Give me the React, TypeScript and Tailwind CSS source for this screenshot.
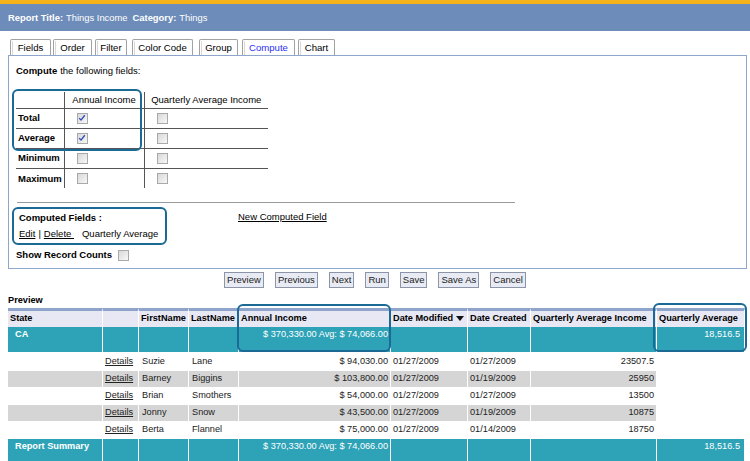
import React from 'react';

const tabs = [
  { label: 'Fields', cls: 'w-[41px] ml-[2px]' },
  { label: 'Order', cls: 'w-[39px] ml-[2px]' },
  { label: 'Filter', cls: 'w-[32px] ml-[3px]' },
  { label: 'Color Code', cls: 'w-[61px] ml-[5px]' },
  { label: 'Group', cls: 'w-[39px] ml-[6px]' },
  { label: 'Compute', cls: 'w-[53px] ml-[4px]', active: true },
  { label: 'Chart', cls: 'w-[37px] ml-[3px]' },
];

const rows = [
  { first: 'Suzie', last: 'Lane', income: '$ 94,030.00', mod: '01/27/2009', created: '01/27/2009', qai: '23507.5' },
  { first: 'Barney', last: 'Biggins', income: '$ 103,800.00', mod: '01/27/2009', created: '01/19/2009', qai: '25950' },
  { first: 'Brian', last: 'Smothers', income: '$ 54,000.00', mod: '01/27/2009', created: '01/27/2009', qai: '13500' },
  { first: 'Jonny', last: 'Snow', income: '$ 43,500.00', mod: '01/27/2009', created: '01/19/2009', qai: '10875' },
  { first: 'Berta', last: 'Flannel', income: '$ 75,000.00', mod: '01/27/2009', created: '01/14/2009', qai: '18750' },
];

const buttons = ['Preview', 'Previous', 'Next', 'Run', 'Save', 'Save As', 'Cancel'];

function Box({ checked }: { checked?: boolean }) {
  return (
    <span className="inline-flex h-[11px] w-[11px] items-center justify-center border border-[#a9a9a9] bg-gradient-to-br from-[#d9d9d9] to-[#f7f7f7] align-middle">
      {checked && (
        <svg viewBox="0 0 9 9" className="h-[8px] w-[8px]">
          <path d="M1.3 4.6 L3.4 6.8 L7.6 1.4" fill="none" stroke="#2b4db5" strokeWidth="1.5" />
        </svg>
      )}
    </span>
  );
}

export default function App() {
  const th = 'h-[19px] border-t-[3px] border-t-[#8fa4ca] border-r border-r-white bg-[#e7e8f4] px-[2px] text-left font-bold align-middle whitespace-nowrap overflow-hidden';
  const teal = 'h-[27px] align-top bg-[#2ea3b7] border-r border-r-white border-b-2 border-b-white px-[2px] pt-[3px] text-white';
  const td = 'h-[17px] border-r border-r-white border-b border-b-white px-[2px] align-middle whitespace-nowrap text-[#222]';

  return (
    <div className="h-[461px] w-[750px] overflow-hidden bg-white font-['Liberation_Sans',Arial,sans-serif] text-[9.2px] leading-none text-black">
      {/* top bars */}
      <div className="h-[4px] bg-[#f6b219]" />
      <div className="flex h-[27px] items-center px-2 text-[9.4px] text-white bg-[#6d8cb9]">
        <b>Report Title:</b>
        <span className="ml-[3px]">Things Income</span>
        <b className="ml-[5px]">Category:</b>
        <span className="ml-[3px]">Things</span>
      </div>

      {/* tabs */}
      <div className="mt-[8px] flex px-2">
        {tabs.map((t) => (
          <div
            key={t.label}
            className={`${t.cls} flex h-[16px] items-center justify-center rounded-t-[2px] border border-b-0 border-[#a2a2a2] shadow-[inset_1px_1px_0_#ffffff,inset_2px_0_0_#d8d8d8] text-[9.6px] ${t.active ? 'text-[#2e2ef5]' : 'text-black'}`}
          >
            {t.label}
          </div>
        ))}
      </div>

      {/* compute panel */}
      <div className="relative mx-2 h-[214px] w-[739px] border border-[#8ea6cc] pl-[7px] pt-[8px] text-[9.5px]">
        <div className="flex h-[13px] items-center">
          <b>Compute</b>
          <span className="ml-[3px]">the following fields:</span>
        </div>

        <table className="mt-[15px] table-fixed border-collapse">
          <colgroup>
            <col className="w-[48px]" />
            <col className="w-[80px]" />
            <col className="w-[124px]" />
          </colgroup>
          <tbody>
            <tr className="h-[16px] border-b border-[#555]">
              <td className="border-r border-[#555]" />
              <td className="border-r border-[#555] text-center">Annual Income</td>
              <td className="text-center">Quarterly Average Income</td>
            </tr>
            {[
              ['Total', true],
              ['Average', true],
              ['Minimum', false],
              ['Maximum', false],
            ].map(([label, checked], i) => (
              <tr key={label as string} className={`h-[20px] ${i < 3 ? 'border-b border-[#555]' : ''}`}>
                <td className="border-r border-[#555] pl-[2px] font-bold">{label}</td>
                <td className="border-r border-[#555] pl-[12px]">
                  <Box checked={checked as boolean} />
                </td>
                <td className="pl-[12px]">
                  <Box />
                </td>
              </tr>
            ))}
          </tbody>
        </table>

        {/* highlight over Total / Average */}
        <div className="absolute left-[3px] top-[33px] h-[62px] w-[130px] rounded-[6px] border-2 border-[#1b6a95]" />

        <div className="ml-[1px] mt-[14px] h-px w-[498px] bg-[#9a9a9a]" />

        <div className="mt-[4px] flex items-start">
          <div className="-ml-[4px] w-[155px] rounded-[6px] border-2 border-[#1b6a95] px-[5px] py-[1px]">
            <div className="flex h-[16px] items-center font-bold">Computed Fields :</div>
            <div className="flex h-[16px] items-center">
              <span className="underline">Edit</span>
              <span className="ml-[3px]">|</span>
              <span className="ml-[3px] underline">Delete&nbsp;</span>
              <span className="ml-[8px]">Quarterly Average</span>
            </div>
          </div>
          <div className="ml-[71px] mt-[2px] flex h-[16px] items-center underline">New Computed Field</div>
        </div>

        <div className="mt-[2px] flex h-[16px] items-center">
          <b>Show Record Counts</b>
          <span className="ml-[6px]">
            <Box />
          </span>
        </div>
      </div>

      {/* buttons */}
      <div className="mt-[3px] flex justify-center gap-[11px]">
        {buttons.map((b) => (
          <div
            key={b}
            className="flex h-[16px] items-center border border-[#8c95a8] bg-[#e8ebf4] px-[2px] text-[9.5px] text-[#222]"
          >
            {b}
          </div>
        ))}
      </div>

      <div className="ml-2 mt-[6px] flex h-[14px] items-center font-bold">Preview</div>

      {/* preview table */}
      <div className="relative ml-2">
        <table className="w-[737px] table-fixed border-separate border-spacing-0">
          <colgroup>
            <col className="w-[95px]" />
            <col className="w-[36px]" />
            <col className="w-[50px]" />
            <col className="w-[50px]" />
            <col className="w-[152px]" />
            <col className="w-[77px]" />
            <col className="w-[63px]" />
            <col className="w-[126px]" />
            <col className="w-[88px]" />
          </colgroup>
          <thead>
            <tr>
              <th className={th}>State</th>
              <th className={th} />
              <th className={th}>FirstName</th>
              <th className={th}>LastName</th>
              <th className={th}>Annual Income</th>
              <th className={th}>
                <span className="inline-flex items-center">
                  Date Modified
                  <svg viewBox="0 0 8 5" className="ml-[3px] h-[5px] w-[8px]">
                    <path d="M0 0 H8 L4 5 Z" fill="#111" />
                  </svg>
                </span>
              </th>
              <th className={th}>Date Created</th>
              <th className={th}>Quarterly Average Income</th>
              <th className={th}>Quarterly Average</th>
            </tr>
          </thead>
          <tbody>
            <tr>
              <td className={`${teal} pl-[7px] font-bold text-black`}>CA</td>
              <td className={teal} />
              <td className={teal} />
              <td className={teal} />
              <td className={`${teal} text-right`}>$ 370,330.00 Avg: $ 74,066.00</td>
              <td className={teal} />
              <td className={teal} />
              <td className={teal} />
              <td className={`${teal} pr-[4px] text-right`}>18,516.5</td>
            </tr>
            {rows.map((r, i) => {
              const bg = i % 2 === 1 ? 'bg-[#d5d5d5]' : '';
              return (
                <tr key={r.first}>
                  <td className={`${td} ${bg}`} />
                  <td className={`${td} ${bg} underline`}>Details</td>
                  <td className={`${td} ${bg} pl-[3px]`}>{r.first}</td>
                  <td className={`${td} ${bg} pl-[3px]`}>{r.last}</td>
                  <td className={`${td} ${bg} text-right`}>{r.income}</td>
                  <td className={`${td} ${bg}`}>{r.mod}</td>
                  <td className={`${td} ${bg}`}>{r.created}</td>
                  <td className={`${td} ${bg} text-right`}>{r.qai}</td>
                  <td className={td} />
                </tr>
              );
            })}
            <tr>
              <td className={`${teal} pl-[7px] font-bold text-black`}>Report Summary</td>
              <td className={teal} />
              <td className={teal} />
              <td className={teal} />
              <td className={`${teal} text-right`}>$ 370,330.00 Avg: $ 74,066.00</td>
              <td className={teal} />
              <td className={teal} />
              <td className={teal} />
              <td className={`${teal} pr-[4px] text-right`}>18,516.5</td>
            </tr>
          </tbody>
        </table>

        {/* highlight boxes */}
        <div className="absolute -top-[4px] left-[229px] h-[48px] w-[154px] rounded-[6px] border-2 border-[#1b6a95]" />
        <div className="absolute -top-[5px] left-[645px] h-[49px] w-[94px] rounded-[6px] border-2 border-[#1b6a95]" />
      </div>
    </div>
  );
}
